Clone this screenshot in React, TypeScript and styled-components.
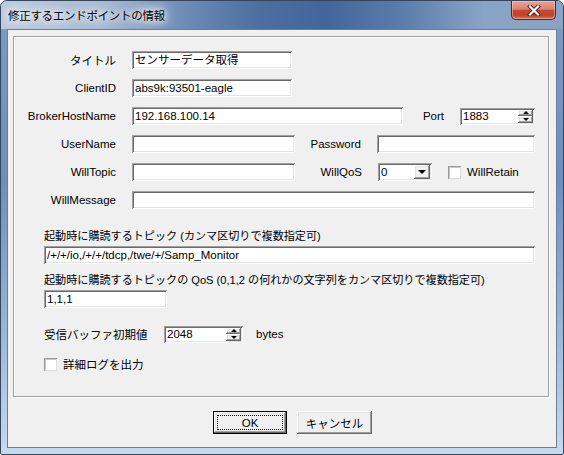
import React from 'react';
import styled, { createGlobalStyle, css } from 'styled-components';

const GlobalStyle = createGlobalStyle`
  html, body {
    margin: 0;
    padding: 0;
    background: #ffffff;
  }
  body {
    font-family: 'Liberation Sans', 'Noto Sans CJK JP', sans-serif;
    font-size: 11.5px;
    color: #000000;
  }
`;

// classic 3D borders
const sunken = css`
  box-shadow: inset 1px 1px 0 #a0a0a0, inset -1px -1px 0 #ffffff,
    inset 2px 2px 0 #696969, inset -2px -2px 0 #e3e3e3;
`;
const raised = css`
  box-shadow: inset -1px -1px 0 #696969, inset 1px 1px 0 #ffffff,
    inset -2px -2px 0 #a0a0a0, inset 2px 2px 0 #e3e3e3;
`;

const Window = styled.div`
  width: 564px;
  height: 455px;
  box-sizing: border-box;
  border: 1px solid #34465e;
  border-radius: 7px 7px 2px 2px;
  padding: 0 6px 6px;
  display: flex;
  flex-direction: column;
  overflow: hidden;
  background: linear-gradient(180deg, #7d9bc1 0%, #6d8fbb 40%, #9db9da 75%, #c6daef 100%);
`;

const TitleBar = styled.div`
  height: 28px;
  margin: 0 -6px;
  padding: 0 7px 0 7px;
  display: flex;
  align-items: flex-start;
  justify-content: space-between;
  background: linear-gradient(
    90deg,
    #bccbdd 0%,
    #a9bcd3 18%,
    #6f8db6 32%,
    #4d6e9f 46%,
    #44659a 58%,
    #5d7eab 72%,
    #8aa4c6 86%,
    #88a3c5 100%
  );
`;

const TitleText = styled.div`
  margin-top: 5px;
  font-family: 'Noto Sans CJK JP', sans-serif;
  font-size: 11.5px;
  line-height: 18px;
  letter-spacing: -0.3px;
  text-shadow: 0 0 6px #ffffff, 0 0 10px #ffffff, 0 0 14px rgba(255, 255, 255, 0.9);
`;

const CloseButton = styled.div`
  width: 45px;
  height: 19px;
  box-sizing: border-box;
  border: 1px solid #5e241a;
  border-top: none;
  border-radius: 0 0 5px 5px;
  display: flex;
  align-items: center;
  justify-content: center;
  background: linear-gradient(180deg, #e6a496 0%, #d98470 45%, #c5492f 52%, #c0432b 78%, #d8734f 100%);
  box-shadow: inset 0 0 0 1px rgba(255, 220, 210, 0.45);
`;

const Client = styled.div`
  flex: 1;
  background: #f0f0f0;
  border: 1px solid #6b7e96;
  display: flex;
  flex-direction: column;
  padding: 6px 7px 0 5px;
`;

const Panel = styled.div`
  height: 361px;
  box-sizing: border-box;
  border: 1px solid #a0a0a0;
  box-shadow: inset 1px 1px 0 #ffffff, 1px 1px 0 #ffffff;
  padding-top: 14px;
  display: flex;
  flex-direction: column;
`;

const Fields = styled.div`
  display: flex;
  flex-direction: column;
  gap: 10px;
`;

const Row = styled.div<{ $top?: number; $h?: number }>`
  display: flex;
  align-items: center;
  height: ${(p) => p.$h ?? 18}px;
  margin-top: ${(p) => p.$top ?? 0}px;
`;

const Label = styled.span<{ $w: number; $align?: string }>`
  width: ${(p) => p.$w}px;
  flex-shrink: 0;
  text-align: ${(p) => p.$align ?? 'right'};
  margin-right: 16px;
  white-space: nowrap;
`;

const TextBox = styled.input<{ $w: number }>`
  width: ${(p) => p.$w}px;
  height: 18px;
  box-sizing: border-box;
  border: none;
  outline: none;
  margin: 0;
  padding: 0 2px 0 3px;
  background: #ffffff;
  font: inherit;
  color: #000;
  line-height: 18px;
  ${sunken};
`;

const Section = styled.div<{ $top: number }>`
  margin-top: ${(p) => p.$top}px;
  padding-left: 30px;
  display: flex;
  flex-direction: column;
`;

const SectionLabel = styled.div`
  font-size: 11.1px;
  line-height: 14px;
  margin-bottom: 3px;
  white-space: nowrap;
`;

const SpinBox = styled.div<{ $w: number }>`
  width: ${(p) => p.$w}px;
  height: 17px;
  box-sizing: border-box;
  padding: 2px;
  display: flex;
  background: #ffffff;
  ${sunken};
`;

const SpinValue = styled.div`
  flex: 1;
  padding-left: 1px;
  line-height: 13px;
`;

const SpinButtons = styled.div`
  width: 15px;
  display: flex;
  flex-direction: column;
`;

const SpinButton = styled.div`
  flex: 1;
  background: #f0f0f0;
  display: flex;
  align-items: center;
  justify-content: center;
  ${raised};
`;

const Arrow = styled.span<{ $dir: 'up' | 'down'; $size?: number }>`
  width: 0;
  height: 0;
  border-left: ${(p) => p.$size ?? 3}px solid transparent;
  border-right: ${(p) => p.$size ?? 3}px solid transparent;
  ${(p) =>
    p.$dir === 'up'
      ? `border-bottom: ${p.$size ?? 3}px solid #000;`
      : `border-top: ${p.$size ?? 3}px solid #000;`}
`;

const Combo = styled.div<{ $w: number }>`
  width: ${(p) => p.$w}px;
  height: 18px;
  box-sizing: border-box;
  padding: 2px;
  display: flex;
  background: #ffffff;
  ${sunken};
`;

const ComboValue = styled.div`
  flex: 1;
  padding-left: 1px;
  line-height: 14px;
`;

const DropButton = styled.div`
  width: 16px;
  background: #f0f0f0;
  display: flex;
  align-items: center;
  justify-content: center;
  ${raised};
`;

const CheckBox = styled.span<{ $left?: number }>`
  width: 13px;
  height: 13px;
  box-sizing: border-box;
  flex-shrink: 0;
  margin-left: ${(p) => p.$left ?? 0}px;
  background: #ffffff;
  box-shadow: inset 1px 1px 0 #9a9a9a, inset -1px -1px 0 #dcdcdc,
    inset 2px 2px 0 #c8c8c8;
`;

const CheckText = styled.span`
  margin-left: 6px;
  white-space: nowrap;
`;

const Unit = styled.span`
  margin-left: 13px;
`;

const ButtonRow = styled.div`
  margin-top: 14px;
  padding-left: 200px;
  display: flex;
  gap: 10px;
`;

const Button = styled.div<{ $w: number; $default?: boolean }>`
  width: ${(p) => p.$w}px;
  height: 23px;
  box-sizing: border-box;
  display: flex;
  align-items: center;
  justify-content: center;
  background: #f0f0f0;
  font-size: 11.5px;
  ${raised};
  ${(p) =>
    p.$default &&
    css`
      border: 1px solid #000;
      padding: 3px;
    `}
`;

const FocusRect = styled.span`
  flex: 1;
  align-self: stretch;
  border: 1px dotted #000;
  display: flex;
  align-items: center;
  justify-content: center;
`;

function CloseGlyph() {
  return (
    <svg width="14" height="11" viewBox="0 0 14 11">
      <path d="M3 1.5 L11 9.5 M11 1.5 L3 9.5" stroke="#4a1a12" strokeWidth="4" strokeLinecap="square" />
      <path d="M3 1.5 L11 9.5 M11 1.5 L3 9.5" stroke="#ffffff" strokeWidth="2.2" strokeLinecap="square" />
    </svg>
  );
}

function Spinner({ w, value }: { w: number; value: string }) {
  return (
    <SpinBox $w={w}>
      <SpinValue>{value}</SpinValue>
      <SpinButtons>
        <SpinButton>
          <Arrow $dir="up" />
        </SpinButton>
        <SpinButton>
          <Arrow $dir="down" />
        </SpinButton>
      </SpinButtons>
    </SpinBox>
  );
}

export default function App() {
  return (
    <>
      <GlobalStyle />
      <Window>
        <TitleBar>
          <TitleText>修正するエンドポイントの情報</TitleText>
          <CloseButton>
            <CloseGlyph />
          </CloseButton>
        </TitleBar>
        <Client>
          <Panel>
            <Fields>
              <Row>
                <Label $w={102}>タイトル</Label>
                <TextBox $w={160} readOnly defaultValue="センサーデータ取得" />
              </Row>
              <Row>
                <Label $w={102}>ClientID</Label>
                <TextBox $w={160} readOnly defaultValue="abs9k:93501-eagle" />
              </Row>
              <Row>
                <Label $w={102}>BrokerHostName</Label>
                <TextBox $w={271} readOnly defaultValue="192.168.100.14" />
                <Label $w={41}>Port</Label>
                <Spinner w={75} value="1883" />
              </Row>
              <Row>
                <Label $w={102}>UserName</Label>
                <TextBox $w={163} readOnly defaultValue="" />
                <Label $w={66}>Password</Label>
                <TextBox $w={158} readOnly defaultValue="" />
              </Row>
              <Row>
                <Label $w={102}>WillTopic</Label>
                <TextBox $w={163} readOnly defaultValue="" />
                <Label $w={67}>WillQoS</Label>
                <Combo $w={54}>
                  <ComboValue>0</ComboValue>
                  <DropButton>
                    <Arrow $dir="down" $size={4} />
                  </DropButton>
                </Combo>
                <CheckBox $left={16} />
                <CheckText>WillRetain</CheckText>
              </Row>
              <Row>
                <Label $w={102}>WillMessage</Label>
                <TextBox $w={403} readOnly defaultValue="" />
              </Row>
            </Fields>

            <Section $top={20}>
              <SectionLabel>起動時に購読するトピック (カンマ区切りで複数指定可)</SectionLabel>
              <TextBox $w={491} readOnly defaultValue="/+/+/io,/+/+/tdcp,/twe/+/Samp_Monitor" />
            </Section>

            <Section $top={9}>
              <SectionLabel>
                起動時に購読するトピックの QoS (0,1,2 の何れかの文字列をカンマ区切りで複数指定可)
              </SectionLabel>
              <TextBox $w={123} readOnly defaultValue="1,1,1" />
            </Section>

            <Section $top={17}>
              <Row>
                <Label $w={104} $align="left">
                  受信バッファ初期値
                </Label>
                <Spinner w={79} value="2048" />
                <Unit>bytes</Unit>
              </Row>
              <Row $top={14} $h={14}>
                <CheckBox />
                <CheckText>詳細ログを出力</CheckText>
              </Row>
            </Section>
          </Panel>

          <ButtonRow>
            <Button $w={74} $default>
              <FocusRect>OK</FocusRect>
            </Button>
            <Button $w={75}>キャンセル</Button>
          </ButtonRow>
        </Client>
      </Window>
    </>
  );
}
